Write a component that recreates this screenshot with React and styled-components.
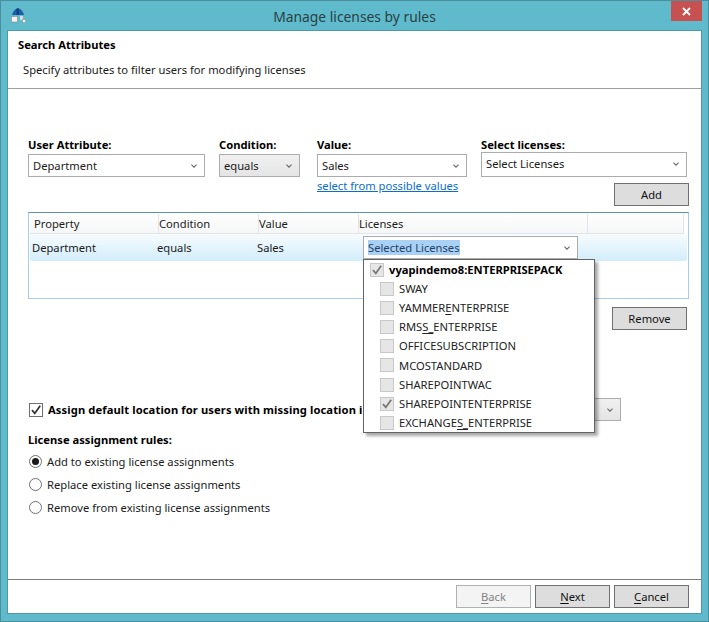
import React from "react";
import styled, { createGlobalStyle } from "styled-components";

const Global = createGlobalStyle`
  html, body { margin: 0; padding: 0; background: #5fbbcc; }
  * { box-sizing: border-box; }
  #root { width: 709px; height: 622px; }
`;

const FONT = `"Noto Sans", "Open Sans", "Liberation Sans", sans-serif`;

const Window = styled.div`
  width: 709px;
  height: 622px;
  display: flex;
  flex-direction: column;
  background: #5fbbcc;
  border: 1px solid #4b8f9c;
  font-family: ${FONT};
  font-size: 11.2px;
  color: #1a1a1a;
  overflow: hidden;
`;

const TitleBar = styled.div`
  height: 29px;
  flex: none;
  position: relative;
  display: flex;
  align-items: center;
  justify-content: center;
  padding-top: 2px;
  font-size: 13.85px;
  color: #2b3f44;
`;

const AppIcon = styled.svg`
  position: absolute;
  left: 10px;
  top: 7px;
`;

const CloseButton = styled.div`
  position: absolute;
  top: 0;
  right: 6px;
  width: 31px;
  height: 20px;
  background: #c75050;
  display: flex;
  align-items: center;
  justify-content: center;
`;

const Client = styled.div`
  flex: 1;
  margin: 0 6px 7px 6px;
  background: #fff;
  border: 1px solid #4e98a8;
  display: flex;
  flex-direction: column;
  min-height: 0;
`;

const Header = styled.div`
  height: 58px;
  flex: none;
  border-bottom: 1px solid #a0a0a0;
  padding: 5px 10px;
`;

const HeaderTitle = styled.div`
  font-weight: 700;
  color: #000;
  line-height: 17px;
`;

const HeaderSub = styled.div`
  margin-top: 8px;
  padding-left: 5px;
  line-height: 17px;
`;

const Main = styled.div`
  flex: 1;
  padding: 48px 12px 0 20px;
  position: relative;
  display: flex;
  flex-direction: column;
`;

const FieldRow = styled.div`
  display: flex;
  align-items: flex-start;
`;

const Field = styled.div`
  width: ${(p) => p.$w}px;
  margin-right: ${(p) => p.$mr || 0}px;
  display: flex;
  flex-direction: column;
`;

const Label = styled.div`
  font-weight: 700;
  color: #000;
  line-height: 16px;
  height: ${(p) => p.$h || 17}px;
  white-space: nowrap;
`;

const Combo = styled.div`
  height: ${(p) => p.$h || 23}px;
  width: ${(p) => (p.$w ? p.$w + "px" : "100%")};
  border: 1px solid #acacac;
  background: ${(p) => (p.$gray ? "linear-gradient(#f0f0f0, #e5e5e5)" : "#fff")};
  display: flex;
  align-items: center;
  justify-content: space-between;
  padding: 0 7px ${(p) => p.$pb || 0}px 4px;
  flex: none;
`;

const LinkText = styled.a`
  margin-top: 1px;
  color: #0a6ed1;
  text-decoration: underline;
  line-height: 16px;
  white-space: nowrap;
`;

const Right = styled.div`
  display: flex;
  justify-content: flex-end;
  margin-top: ${(p) => p.$mt || 0}px;
  padding-right: ${(p) => p.$pr || 0}px;
`;

const Button = styled.div`
  width: 75px;
  height: 23px;
  flex: none;
  background: ${(p) => (p.$disabled ? "#f4f4f4" : "#dddddd")};
  border: 1px solid ${(p) => (p.$disabled ? "#adb2b5" : "#707070")};
  color: ${(p) => (p.$disabled ? "#838383" : "#111")};
  display: flex;
  align-items: center;
  justify-content: center;
  u { text-underline-offset: 2px; }
`;

const Table = styled.div`
  margin-top: 6px;
  height: 87px;
  border: 1px solid #a9cfe6;
  border-top-color: #5b93b8;
  padding: 1px;
  flex: none;
`;

const HeadRow = styled.div`
  display: grid;
  grid-template-columns: 129px 100px 100px 229px 1fr;
  height: 20px;
  margin-right: 3px;
  background: linear-gradient(#ffffff, #f5f6f7);
  border-bottom: 1px solid #e3e5e7;
`;

const HeadCell = styled.div`
  padding-left: ${(p) => p.$pl ?? 4}px;
  border-right: 1px solid #e3e5e7;
  line-height: 19px;
  white-space: nowrap;
`;

const DataRow = styled.div`
  display: grid;
  grid-template-columns: 125px 100px 106px 1fr;
  height: 27px;
  margin: 0;
  align-items: center;
  padding-left: 2px;
  border-radius: 2px;
  background: linear-gradient(#f7fcff, #d2edfb);
`;

const Selected = styled.span`
  background: #a9d1f5;
  color: #1f3f66;
  line-height: 15px;
`;

const Popup = styled.div`
  position: absolute;
  left: 355px;
  top: 170px;
  width: 232px;
  height: 174px;
  background: #fff;
  border: 1px solid #646464;
  box-shadow: 3px 3px 3px rgba(0, 0, 0, 0.35);
  padding: 0 0 0 6px;
  z-index: 2;
`;

const PopupItem = styled.div`
  height: ${(p) => p.$h || 19}px;
  display: flex;
  align-items: center;
  gap: 5px;
  padding-left: ${(p) => (p.$nested ? 10 : 0)}px;
  font-weight: ${(p) => (p.$bold ? 700 : 400)};
  color: ${(p) => (p.$bold ? "#000" : "#222")};
  white-space: nowrap;
  u { text-underline-offset: 2px; }
`;

const Box = styled.span`
  width: 14px;
  height: 14px;
  flex: none;
  border: 1px solid ${(p) => (p.$dark ? "#707070" : "#c8c8c8")};
  background: ${(p) => (p.$dark ? "#fff" : "#e6e6e6")};
  display: inline-flex;
  align-items: center;
  justify-content: center;
`;

const AssignRow = styled.div`
  margin-top: 68px;
  height: 23px;
  display: flex;
  align-items: center;
  padding-left: 1px;
`;

const AssignLabel = styled.span`
  margin-left: 5px;
  width: 315px;
  flex: none;
  font-weight: 700;
  letter-spacing: 0.1px;
  color: #000;
  white-space: nowrap;
`;

const AssignCombo = styled(Combo)`
  justify-content: flex-end;
  background: linear-gradient(#f0f0f0, #e5e5e5);
`;

const RulesTitle = styled(Label)`
  margin-top: 10px;
  height: 18px;
  line-height: 18px;
`;

const RadioGroup = styled.div`
  margin-top: 1px;
  display: flex;
  flex-direction: column;
`;

const Radio = styled.label`
  display: flex;
  align-items: center;
  gap: 5px;
  height: 23px;
  white-space: nowrap;
`;

const RadioDot = styled.span`
  width: 13px;
  height: 13px;
  margin-left: 1px;
  border-radius: 50%;
  border: 1px solid #707070;
  background: #fff;
  flex: none;
  display: inline-flex;
  align-items: center;
  justify-content: center;
  &::after {
    content: "";
    width: 7px;
    height: 7px;
    border-radius: 50%;
    background: ${(p) => (p.$on ? "#1a1a1a" : "transparent")};
  }
`;

const Footer = styled.div`
  height: 34px;
  flex: none;
  border-top: 1px solid #7d7d7d;
  display: flex;
  justify-content: flex-end;
  align-items: center;
  gap: 4px;
  padding-right: 12px;
  background: #fff;
`;

const Chevron = ({ color = "#6a6a6a" }) => (
  <svg width="6" height="4" viewBox="0 0 6 4" style={{ flex: "none" }}>
    <path d="M0.4 0.6 L3 3.2 L5.6 0.6" fill="none" stroke={color} strokeWidth="1.1" />
  </svg>
);

const Check = ({ color = "#777" }) => (
  <svg width="12" height="12" viewBox="0 0 12 12">
    <path d="M2 6.2 L4.8 9.4 L10.2 1.8" fill="none" stroke={color} strokeWidth="1.8" />
  </svg>
);

const items = [
  ["SWAY"],
  ["YAMMER", "E", "NTERPRISE"],
  ["RMS", "S_", "ENTERPRISE"],
  ["OFFICESUBSCRIPTION"],
  ["MCOSTANDARD"],
  ["SHAREPOINTWAC"],
  ["SHAREPOINTENTERPRISE"],
  ["EXCHANGE", "S_", "ENTERPRISE"],
];

export default function App() {
  return (
    <>
      <Global />
      <Window>
        <TitleBar>
          <AppIcon width="15" height="15" viewBox="0 0 15 15">
            <path d="M1 7 C2 3 4.5 0.5 7 0.5 C9.5 0.5 12 3 13 7 Z" fill="#1f5ea8" />
            <path d="M5.5 0.5 h2.5 v6.5 h-2.5 Z" fill="#123f80" />
            <rect x="0.5" y="8.5" width="6" height="5.5" fill="#f2f2f2" stroke="#8a8a8a" strokeWidth="0.6" />
            <rect x="9" y="8" width="3" height="4" fill="#dcdcdc" />
            <rect x="11.5" y="11.5" width="3" height="3" fill="#f4f4f4" stroke="#888" strokeWidth="0.5" />
          </AppIcon>
          Manage licenses by rules
          <CloseButton>
            <svg width="9" height="9" viewBox="0 0 9 9">
              <path d="M1 1 L8 8 M8 1 L1 8" stroke="#fff" strokeWidth="1.8" />
            </svg>
          </CloseButton>
        </TitleBar>
        <Client>
          <Header>
            <HeaderTitle>Search Attributes</HeaderTitle>
            <HeaderSub>Specify attributes to filter users for modifying licenses</HeaderSub>
          </Header>
          <Main>
            <FieldRow>
              <Field $w={177} $mr={14}>
                <Label>User Attribute:</Label>
                <Combo>Department<Chevron /></Combo>
              </Field>
              <Field $w={81} $mr={17}>
                <Label>Condition:</Label>
                <Combo $gray>equals<Chevron /></Combo>
              </Field>
              <Field $w={150} $mr={14}>
                <Label>Value:</Label>
                <Combo>Sales<Chevron /></Combo>
                <LinkText>select from possible values</LinkText>
              </Field>
              <Field $w={206}>
                <Label $h={15}>Select licenses:</Label>
                <Combo $h={25} $pb={2}>Select Licenses<Chevron /></Combo>
              </Field>
            </FieldRow>
            <Right $mt={-11}>
              <Button>Add</Button>
            </Right>
            <Table>
              <HeadRow>
                <HeadCell>Property</HeadCell>
                <HeadCell $pl={0}>Condition</HeadCell>
                <HeadCell $pl={0}>Value</HeadCell>
                <HeadCell $pl={0}>Licenses</HeadCell>
                <HeadCell />
              </HeadRow>
              <DataRow>
                <span>Department</span>
                <span>equals</span>
                <span>Sales</span>
                <Combo $w={215}>
                  <Selected>Selected Licenses</Selected>
                  <Chevron />
                </Combo>
              </DataRow>
            </Table>
            <Right $mt={8} $pr={2}>
              <Button>Remove</Button>
            </Right>
            <AssignRow>
              <Box $dark><Check color="#333" /></Box>
              <AssignLabel>Assign default location for users with missing location in</AssignLabel>
              <AssignCombo $w={258}><Chevron /></AssignCombo>
            </AssignRow>
            <RulesTitle>License assignment rules:</RulesTitle>
            <RadioGroup>
              <Radio><RadioDot $on />Add to existing license assignments</Radio>
              <Radio><RadioDot />Replace existing license assignments</Radio>
              <Radio><RadioDot />Remove from existing license assignments</Radio>
            </RadioGroup>
            <Popup>
              <PopupItem $bold>
                <Box><Check /></Box>
                vyapindemo8:ENTERPRISEPACK
              </PopupItem>
              {items.map((it) => (
                <PopupItem $nested $h={it[0] === "MCOSTANDARD" ? 20 : 19} key={it.join("")}>
                  <Box>{it[0] === "SHAREPOINTENTERPRISE" && <Check />}</Box>
                  <span>
                    {it[0]}
                    {it[1] && <u>{it[1]}</u>}
                    {it[2]}
                  </span>
                </PopupItem>
              ))}
            </Popup>
          </Main>
          <Footer>
            <Button $disabled><u>B</u>ack</Button>
            <Button><u>N</u>ext</Button>
            <Button><u>C</u>ancel</Button>
          </Footer>
        </Client>
      </Window>
    </>
  );
}
